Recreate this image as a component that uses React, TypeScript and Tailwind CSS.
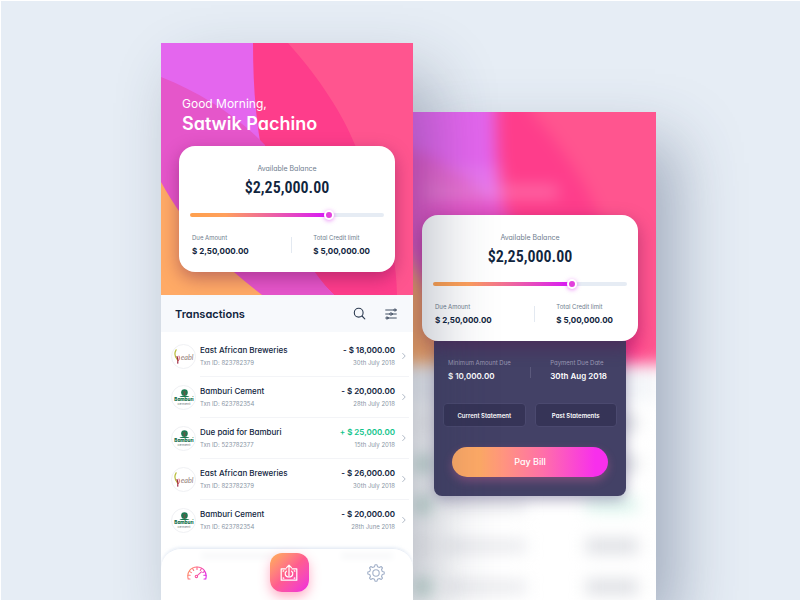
import React from 'react';

type Brand = 'eabl' | 'bamburi';

type Transaction = {
  brand: Brand;
  name: string;
  id: string;
  amount: string;
  date: string;
  credit?: boolean;
};

const transactions: Transaction[] = [
  { brand: 'eabl', name: 'East African Breweries', id: '823782379', amount: '- $ 18,000.00', date: '30th July 2018' },
  { brand: 'bamburi', name: 'Bamburi Cement', id: '623782354', amount: '- $ 20,000.00', date: '28th July 2018' },
  { brand: 'bamburi', name: 'Due paid for Bamburi', id: '523782377', amount: '+ $ 25,000.00', date: '15th July 2018', credit: true },
  { brand: 'eabl', name: 'East African Breweries', id: '823782379', amount: '- $ 26,000.00', date: '30th July 2018' },
  { brand: 'bamburi', name: 'Bamburi Cement', id: '623782354', amount: '- $ 20,000.00', date: '28th June 2018' },
];

/* Shapes run past the top and sides of the view box so that a blurred copy keeps solid edges. */
function HeaderArt({ bleed }: { bleed?: boolean }) {
  return (
    <svg
      viewBox="0 0 252 252"
      preserveAspectRatio="none"
      className={bleed ? 'col-start-1 row-start-1 h-full w-full overflow-visible' : 'col-start-1 row-start-1 h-full w-full'}
      aria-hidden="true"
    >
      <rect x="-40" y="-40" width="332" height="292" fill="#ff558f" />
      <path d="M-40 -40H127V0C160 37 182 72 194 102C216 150 235 195 236 252H-40Z" fill="#fe3d8b" />
      <path d="M-40 -40H92V0C92 110 112 192 173 252H-40Z" fill="#e466ee" />
      <path d="M-40 20L0 34C40 50 75 72 104 102C116 160 138 217 173 252H-40Z" fill="#e556ca" />
      <path d="M-40 110L0 139C18 172 46 210 101 252H-40Z" fill="#ffaa66" />
    </svg>
  );
}

function BrandLogo({ brand }: { brand: Brand }) {
  return (
    <span className="flex size-[25px] shrink-0 items-center justify-center rounded-full border border-[#f0f1f4] bg-white">
      {brand === 'eabl' ? (
        <svg viewBox="-1 -1 24 24" className="size-[22px]" role="img" aria-label="EABL">
          <path d="M2.4 3.2C0.4 6.6 0.6 10.6 4.2 14.6" fill="none" stroke="#b9bd3c" strokeWidth="1.3" strokeLinecap="round" />
          <path d="M4.2 17.6C4.6 14.8 4.4 12.6 3.4 10.6" fill="none" stroke="#9b2340" strokeWidth="1.3" strokeLinecap="round" />
          <path d="M5 15C6.2 13.6 6.2 11.8 5.6 10" fill="none" stroke="#d03a52" strokeWidth="0.9" strokeLinecap="round" />
          <text x="7.4" y="14.4" fontSize="8" fontStyle="italic" fill="#94807a" fontFamily="Lato, sans-serif">
            eabl
          </text>
        </svg>
      ) : (
        <svg viewBox="-1 -1 24 24" className="size-[22px]" role="img" aria-label="Bamburi Cement">
          <circle cx="11.5" cy="5" r="3.6" fill="#1b7a52" />
          <path d="M11.5 3.6V9.6M11.5 5L9.8 3.8M11.5 5L13.2 3.8M11.5 6.8L10 6.6M11.5 6.8L13 6.6" stroke="#7a4f45" strokeWidth="0.8" fill="none" />
          <path d="M6 9.8C9 7.6 14 7.6 17 9.8Z" fill="#1b7a52" />
          <text x="11" y="13.8" textAnchor="middle" fontSize="5" fontWeight="800" fill="#0e6b47" fontFamily="Inter, sans-serif">
            Bamburi
          </text>
          <text x="11" y="18.8" textAnchor="middle" fontSize="4" fill="#6d7a78" fontFamily="Inter, sans-serif">
            cement
          </text>
        </svg>
      )}
    </span>
  );
}

function SearchIcon() {
  return (
    <svg viewBox="0 0 13 13" className="size-[13px]" fill="none" stroke="#2b3a50" strokeWidth="1.1" strokeLinecap="round" aria-hidden="true">
      <circle cx="5.7" cy="5.7" r="4.4" />
      <path d="M9 9L11.8 11.8" />
    </svg>
  );
}

function FilterIcon() {
  return (
    <svg viewBox="0 0 12 12" className="size-3" fill="none" stroke="#2b3a50" strokeWidth="0.9" strokeLinecap="round" aria-hidden="true">
      <path d="M0.7 2H8.8M0.7 6H4.7M7.3 6H11.3M3.2 10H11.3" />
      <circle cx="10" cy="2" r="1.1" />
      <circle cx="6" cy="6" r="1.2" />
      <circle cx="2" cy="10" r="1.1" />
    </svg>
  );
}

function GaugeIcon() {
  return (
    <svg viewBox="0 0 20 14" className="h-[14px] w-5" fill="none" stroke="url(#gauge)" strokeWidth="1.1" strokeLinecap="round" aria-hidden="true">
      <defs>
        <linearGradient id="gauge" gradientUnits="userSpaceOnUse" x1="0" y1="0" x2="20" y2="10">
          <stop offset="0" stopColor="#ffa65c" />
          <stop offset="0.5" stopColor="#ff5f8f" />
          <stop offset="1" stopColor="#dd22ee" />
        </linearGradient>
      </defs>
      <path d="M3 13H1.2C-0.6 6 4 1 10 1S20.4 6 18.8 13H17" />
      <path d="M10 1V3.4M5.6 2.4L6.7 4.4M14.4 2.4L13.3 4.4M2.4 5.4L4.4 6.6M17.6 5.4L15.8 6.4M1 9.2H3.2M19 9.2H16.8" />
      <path d="M10.2 9.6L14.4 5.8" />
      <circle cx="9.4" cy="10.4" r="1.2" />
    </svg>
  );
}

function TransferIcon() {
  return (
    <svg viewBox="0 0 18 18" className="size-[18px]" fill="none" stroke="#ffffff" strokeWidth="1.2" strokeLinecap="round" strokeLinejoin="round" aria-hidden="true">
      <path d="M6 4.8H1.2V16.2H16.8V4.8H12" />
      <path d="M9 12V1.4M6.6 3.6L9 1.2L11.4 3.6" />
      <path d="M6.4 7.2C4.2 8.8 5 13 9 13S13.8 8.8 11.6 7.2" />
      <path d="M3.2 7.2V6.8H3.8M14.2 6.8H14.8V7.2M3.2 13.8V14.2H3.8M14.2 14.2H14.8V13.8" />
    </svg>
  );
}

function GearIcon() {
  return (
    <svg viewBox="0 0 18 18" className="size-[18px]" fill="none" stroke="#a3b1c9" strokeWidth="1.1" strokeLinejoin="round" aria-hidden="true">
      <path d="M7.5 2.7L8 0.8H10L10.5 2.7L12.4 3.5L14.1 2.5L15.5 3.9L14.5 5.6L15.3 7.5L17.2 8V10L15.3 10.5L14.5 12.4L15.5 14.1L14.1 15.5L12.4 14.5L10.5 15.3L10 17.2H8L7.5 15.3L5.6 14.5L3.9 15.5L2.5 14.1L3.5 12.4L2.7 10.5L0.8 10V8L2.7 7.5L3.5 5.6L2.5 3.9L3.9 2.5L5.6 3.5Z" />
      <circle cx="9" cy="9" r="3.2" />
    </svg>
  );
}

function BalanceCard({ id }: { id: string }) {
  return (
    <section className="flex flex-col rounded-2xl bg-white px-[11px] pt-[18px] pb-[15px] shadow-[0_6px_18px_rgba(90,10,70,0.4)]">
      <label htmlFor={id} className="text-center text-[7px] leading-[10px] text-[#6f7d8e]">
        Available Balance
      </label>
      <p className="mt-1 text-center font-['Liberation_Sans_Narrow','Roboto_Condensed','Roboto',sans-serif] text-[16px] leading-5 font-semibold text-[#10243d]">
        $2,25,000.00
      </p>
      <input
        id={id}
        type="range"
        min={0}
        max={100}
        defaultValue={73}
        className="mt-[15px] block h-1 w-full appearance-none rounded-full bg-[linear-gradient(to_right,#ffa04d_0%,#ffa05c_18%,#d91ff0_68%,#d91ff0_72%,#e6ecf4_72%)] [&::-webkit-slider-thumb]:size-[10px] [&::-webkit-slider-thumb]:appearance-none [&::-webkit-slider-thumb]:rounded-full [&::-webkit-slider-thumb]:border-2 [&::-webkit-slider-thumb]:border-white [&::-webkit-slider-thumb]:bg-[#e23fdc] [&::-webkit-slider-thumb]:shadow-[0_1px_4px_rgba(217,31,240,0.5)]"
      />
      <dl className="mt-4 flex justify-between pr-[14px] pl-[2px]">
        <div>
          <dt className="text-[6px] leading-[10px] text-[#6f7d8e]">Due Amount</dt>
          <dd className="mt-[2px] text-[8px] leading-3 font-bold text-[#10243d]">$ 2,50,000.00</dd>
        </div>
        <div className="my-1 ml-5 w-px bg-[#e3e9f1]" />
        <div>
          <dt className="text-[6px] leading-[10px] text-[#6f7d8e]">Total Credit limit</dt>
          <dd className="mt-[2px] text-[8px] leading-3 font-bold text-[#10243d]">$ 5,00,000.00</dd>
        </div>
      </dl>
    </section>
  );
}

function TransactionRow({ item }: { item: Transaction }) {
  return (
    <li className="group flex h-[41px] items-center pr-1 pl-[10px]">
      <BrandLogo brand={item.brand} />
      <a href="#transaction" className="ml-1 flex h-full flex-1 items-center border-b border-[#f3f4f7] group-last:border-transparent">
        <span className="flex-1">
          <span className="block text-[8px] leading-3 font-medium text-[#10243d]">{item.name}</span>
          <span className="mt-px block text-[6px] leading-3 text-[#8a96a5]">Txn ID: {item.id}</span>
        </span>
        <span className="text-right">
          <span className={item.credit ? 'block text-[8px] leading-3 font-semibold text-[#12c48b]' : 'block text-[8px] leading-3 font-semibold text-[#10243d]'}>
            {item.amount}
          </span>
          <span className="mt-px block text-[6px] leading-3 text-[#8a96a5]">{item.date}</span>
        </span>
        <svg viewBox="0 0 4 8" className="mr-[3px] ml-[7px] h-2 w-1" fill="none" stroke="#a9b3c2" strokeWidth="0.9" strokeLinecap="round" aria-hidden="true">
          <path d="M0.7 1.4L3.2 4L0.7 6.6" />
        </svg>
      </a>
    </li>
  );
}

function BottomNav() {
  return (
    <nav className="absolute inset-x-0 bottom-0 flex h-[52px] items-start justify-between rounded-t-[20px] border-t border-[#e9eef6] bg-white/90 pt-1 pr-7 pl-[26px] shadow-[0_-1px_3px_rgba(190,205,230,0.35)] backdrop-blur-[3px]">
      <button type="button" aria-label="Dashboard" className="flex h-10 w-6 items-center">
        <GaugeIcon />
      </button>
      <button
        type="button"
        aria-label="Transfer"
        className="flex size-[39px] items-center justify-center rounded-xl bg-linear-to-br from-[#ffb04f] via-[#ff5c8f] to-[#f01fe0] shadow-[0_5px_12px_rgba(255,80,130,0.45)]"
      >
        <TransferIcon />
      </button>
      <button type="button" aria-label="Settings" className="flex h-10 items-center">
        <GearIcon />
      </button>
    </nav>
  );
}

function HomeScreen() {
  return (
    <main className="relative z-20 mt-[42px] w-[31.5vw] max-w-[400px] min-w-[252px] overflow-hidden bg-white shadow-[20px_30px_60px_rgba(40,52,80,0.32)]">
      <header className="grid">
        <HeaderArt />
        <div className="col-start-1 row-start-1 px-[18px] pt-[53px] pb-[23px]">
          <h1 className="pl-[3px] text-white">
            <span className="block text-[12px] leading-4">Good Morning,</span>
            <span className="mt-px block text-[18px] leading-[22px] font-semibold">Satwik Pachino</span>
          </h1>
          <div className="mt-[11px]">
            <BalanceCard id="balance-home" />
          </div>
        </div>
      </header>
      <section>
        <div className="flex h-[37px] items-center bg-[#f7f9fc] pr-4 pl-[14px]">
          <h2 className="flex-1 text-[11px] leading-4 font-semibold text-[#10243d]">Transactions</h2>
          <button type="button" aria-label="Search" className="mr-[19px]">
            <SearchIcon />
          </button>
          <button type="button" aria-label="Filter">
            <FilterIcon />
          </button>
        </div>
        <ul className="pt-1">
          {transactions.map((item, index) => (
            <TransactionRow key={index} item={item} />
          ))}
        </ul>
        <div className="flex justify-between pt-3 pr-5 pl-10" aria-hidden="true">
          <span className="h-[6px] w-[84px] bg-[#a9b2bf]" />
          <span className="h-[6px] w-[52px] bg-[#a9b2bf]" />
        </div>
      </section>
      <BottomNav />
    </main>
  );
}

type BackdropTone = 'plain' | 'green' | 'credit';

const backdropRows: BackdropTone[] = ['plain', 'green', 'credit', 'plain', 'green', 'plain', 'green', 'plain'];

function BackdropRow({ tone }: { tone: BackdropTone }) {
  return (
    <div className="flex h-[41px] shrink-0 items-center pr-[18px] pl-[10px]">
      <span className={tone === 'plain' ? 'size-[18px] rounded-full bg-[#f4f4f4]' : 'size-[18px] rounded-full bg-[#b5d3c8]'} />
      <span className="ml-3 h-3 w-[82px] bg-[#e6e7eb]" />
      <span className={tone === 'credit' ? 'ml-auto h-3 w-[52px] bg-[#d6f4ea]' : 'ml-auto h-[14px] w-[52px] bg-[#dadce1]'} />
    </div>
  );
}

function Backdrop() {
  return (
    <div className="col-start-1 row-start-1 h-full min-h-0 overflow-hidden bg-white" aria-hidden="true">
      <div className="flex flex-col blur-[8px]">
        <div className="grid h-[252px] shrink-0">
          <HeaderArt bleed />
          <div className="col-start-1 row-start-1 pt-[58px] pl-5">
            <div className="h-2 w-[80px] bg-white/20" />
            <div className="mt-2 h-3 w-[134px] bg-white/25" />
          </div>
        </div>
        <div className="h-[38px] shrink-0 bg-[#f4f6f9]" />
        {backdropRows.map((tone, index) => (
          <BackdropRow key={index} tone={tone} />
        ))}
      </div>
    </div>
  );
}

function BillScreen() {
  return (
    <aside className="-ml-[9px] mt-[111px] grid w-[31.5vw] max-w-[400px] min-w-[252px] grid-rows-[minmax(0,1fr)] shadow-[20px_30px_60px_rgba(50,65,100,0.38)]">
      <Backdrop />
      <div className="z-10 col-start-1 row-start-1 px-[18px] pt-[103px]">
        <div className="relative z-10">
          <BalanceCard id="balance-bill" />
        </div>
        <section className="mx-3 rounded-b-lg bg-[#434166] px-[9px] pt-4 pb-[19px] shadow-[0_4px_14px_rgba(50,45,100,0.4)]">
          <dl className="flex justify-between pr-[10px] pl-[5px]">
            <div>
              <dt className="text-[6px] leading-3 text-[#9b99b4]">Minimum Amount Due</dt>
              <dd className="mt-px text-[8px] leading-3 font-semibold text-white">$ 10,000.00</dd>
            </div>
            <div className="mt-[10px] mb-1 w-px bg-[#5b597c]" />
            <div>
              <dt className="text-[6px] leading-3 text-[#9b99b4]">Payment Due Date</dt>
              <dd className="mt-px text-[8px] leading-3 font-semibold text-white">30th Aug 2018</dd>
            </div>
          </dl>
          <div className="mt-[21px] grid grid-cols-2 gap-[9px]">
            <button type="button" className="h-6 rounded border border-[#4b496f] bg-[#363457] text-[6px] font-semibold whitespace-nowrap text-white">
              Current Statement
            </button>
            <button type="button" className="h-6 rounded border border-[#4b496f] bg-[#363457] text-[6px] font-semibold whitespace-nowrap text-white">
              Past Statements
            </button>
          </div>
          <div className="px-[9px]">
            <button
              type="button"
              className="mt-5 h-[30px] w-full rounded-full bg-[linear-gradient(to_right,#ffaa66_0%,#ffaa66_18%,#ff70a8_58%,#f82fec_92%)] text-[9px] font-medium text-white shadow-[0_4px_10px_rgba(255,110,170,0.3)]"
            >
              Pay Bill
            </button>
          </div>
        </section>
      </div>
    </aside>
  );
}

export default function App() {
  return (
    <div className="flex h-screen justify-center overflow-hidden border-t border-l border-white bg-[#e6edf5] pl-4 font-['Inter','Open_Sans',sans-serif] [font-feature-settings:'cv11']">
      <HomeScreen />
      <BillScreen />
    </div>
  );
}
